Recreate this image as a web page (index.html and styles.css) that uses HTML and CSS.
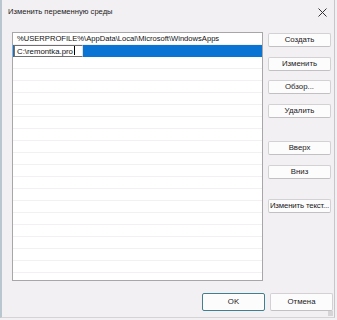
FILE: index.html
```html
<!DOCTYPE html>
<html lang="ru">
<head>
<meta charset="utf-8">
<link rel="stylesheet" href="styles.css">
</head>
<body>
<div class="window">
  <div class="titlebar">
    <span class="title">Изменить переменную среды</span>
    <svg class="close" width="9" height="9" viewBox="0 0 9 9"><path d="M0.5 0.5 L8.5 8.5 M8.5 0.5 L0.5 8.5" stroke="#333" stroke-width="1" fill="none"/></svg>
  </div>
  <div class="main">
    <div class="list">
      <div class="row">%USERPROFILE%\AppData\Local\Microsoft\WindowsApps</div>
      <div class="row selected"><span class="edit">C:\remontka.pro<span class="caret"></span></span></div>
      <div class="row"></div><div class="row"></div><div class="row"></div><div class="row"></div>
      <div class="row"></div><div class="row"></div><div class="row"></div><div class="row"></div>
      <div class="row"></div><div class="row"></div><div class="row"></div><div class="row"></div>
      <div class="row"></div><div class="row"></div><div class="row"></div><div class="row"></div>
      <div class="row"></div><div class="row"></div>
    </div>
    <div class="side">
      <button class="btn b1">Создать</button>
      <button class="btn b2">Изменить</button>
      <button class="btn b3">Обзор...</button>
      <button class="btn b4">Удалить</button>
      <button class="btn b5">Вверх</button>
      <button class="btn b6">Вниз</button>
      <button class="btn b7">Изменить текст...</button>
    </div>
  </div>
  <div class="footer">
    <button class="btn ok">OK</button>
    <button class="btn">Отмена</button>
  </div>
  <div class="grip"></div>
</div>
</body>
</html>
```
FILE: styles.css
```css
html, body {
  margin: 0;
  padding: 0;
  width: 337px;
  height: 320px;
  overflow: hidden;
  background: #f3f0f3;
  font-family: "Liberation Sans", Arial, sans-serif;
  color: #1a1a1a;
}
.window {
  position: relative;
  width: 332px;
  height: 317px;
  border-left: 2px solid #b9c6cf;
  border-right: 1px solid #c9c6c9;
  border-bottom: 1px solid #d6d3d6;
  box-sizing: content-box;
  background: #f3f0f3;
}
.titlebar {
  height: 32px;
  display: flex;
  align-items: flex-start;
  justify-content: space-between;
  padding: 6px 6px 0 6px;
  box-sizing: border-box;
}
.title {
  font-size: 7.6px;
  line-height: 12px;
  color: #222;
}
.close {
  margin-top: 2px;
  margin-right: 1px;
}
.main {
  display: flex;
  padding-left: 10px;
  gap: 5px;
}
.list {
  width: 251px;
  height: 249px;
  box-sizing: border-box;
  border: 1px solid #a8a6a8;
  background: #fff;
  overflow: hidden;
}
.row {
  height: 12px;
  border-bottom: 1px solid #f2f0f2;
  box-sizing: border-box;
  font-size: 7.6px;
  line-height: 12px;
  padding-left: 4px;
  white-space: nowrap;
  color: #111;
}
.selected {
  background: #0a74d4;
  padding-left: 1px;
  border-bottom-color: #0a74d4;
}
.edit {
  display: inline-block;
  width: 69px;
  height: 12px;
  box-sizing: border-box;
  background: #fff;
  border: 1px solid #6f6f6f;
  border-right-color: #e0e0e0;
  padding-left: 2px;
  font-size: 7.8px;
  line-height: 10px;
  vertical-align: top;
}
.caret {
  display: inline-block;
  width: 1px;
  height: 9px;
  background: #000;
  vertical-align: -1px;
  margin-left: 1px;
}
.side {
  display: flex;
  flex-direction: column;
  width: 63px;
  padding-top: 1px;
}
.btn {
  width: 63px;
  height: 14px;
  padding: 0;
  margin: 0;
  background: #fdfcfd;
  border: 1px solid #d3d1d3;
  border-bottom-color: #c2c0c2;
  border-radius: 2px;
  font-family: "Liberation Sans", Arial, sans-serif;
  font-size: 7.8px;
  line-height: 12px;
  color: #1a1a1a;
  white-space: nowrap;
}
.b2 { margin-top: 10px; }
.b3 { margin-top: 9px; }
.b4 { margin-top: 10px; }
.b5 { margin-top: 23px; }
.b6 { margin-top: 10px; }
.b7 { margin-top: 20px; letter-spacing: -0.15px; }
.footer {
  display: flex;
  justify-content: flex-end;
  gap: 5px;
  padding-right: 1px;
  margin-top: 12px;
}
.footer .btn {
  height: 18px;
}
.ok {
  border: 1px solid #3f7f8f;
  box-shadow: inset 0 0 0 1px #fff;
}
.grip {
  position: absolute;
  right: 1px;
  bottom: 1px;
  width: 5px;
  height: 5px;
  background: radial-gradient(circle, #b5b3b5 0.6px, transparent 0.8px) 0 0 / 2px 2px;
}
```
